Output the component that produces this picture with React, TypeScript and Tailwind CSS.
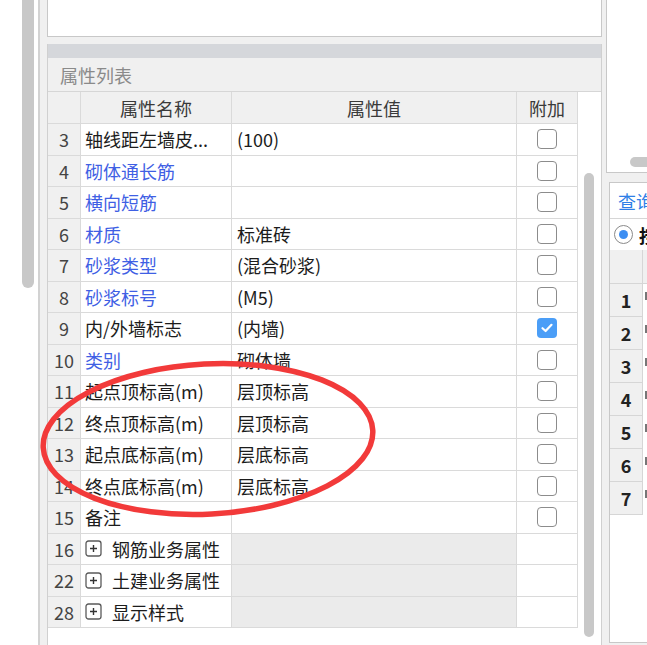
import React from "react";

type Row = {
  n: string;
  name: string;
  val: string;
  blue?: boolean;
  cb?: boolean;
  checked?: boolean;
  group?: boolean;
};

const rows: Row[] = [
  { n: "3", name: "轴线距左墙皮...", val: "(100)", cb: true },
  { n: "4", name: "砌体通长筋", val: "", blue: true, cb: true },
  { n: "5", name: "横向短筋", val: "", blue: true, cb: true },
  { n: "6", name: "材质", val: "标准砖", blue: true, cb: true },
  { n: "7", name: "砂浆类型", val: "(混合砂浆)", blue: true, cb: true },
  { n: "8", name: "砂浆标号", val: "(M5)", blue: true, cb: true },
  { n: "9", name: "内/外墙标志", val: "(内墙)", cb: true, checked: true },
  { n: "10", name: "类别", val: "砌体墙", blue: true, cb: true },
  { n: "11", name: "起点顶标高(m)", val: "层顶标高", cb: true },
  { n: "12", name: "终点顶标高(m)", val: "层顶标高", cb: true },
  { n: "13", name: "起点底标高(m)", val: "层底标高", cb: true },
  { n: "14", name: "终点底标高(m)", val: "层底标高", cb: true },
  { n: "15", name: "备注", val: "", cb: true },
  { n: "16", name: "钢筋业务属性", val: "", group: true },
  { n: "22", name: "土建业务属性", val: "", group: true },
  { n: "28", name: "显示样式", val: "", group: true },
];

function Checkbox({ checked }: { checked?: boolean }) {
  if (checked) {
    return (
      <div className="w-[20px] h-[20px] rounded-[4px] bg-[#4b9ef7] flex items-center justify-center">
        <svg width="14" height="14" viewBox="0 0 14 14">
          <path d="M2.5 7.2 L5.6 10 L11.5 3.8" fill="none" stroke="#fff" strokeWidth="2.2" strokeLinecap="round" strokeLinejoin="round" />
        </svg>
      </div>
    );
  }
  return <div className="w-[20px] h-[20px] rounded-[4px] border-[1.5px] border-[#8c8c8c] bg-white" />;
}

function PlusBox() {
  return (
    <svg width="17" height="17" viewBox="0 0 17 17" className="shrink-0">
      <rect x="1" y="1" width="15" height="15" rx="2.5" fill="#fff" stroke="#5a5a5a" strokeWidth="1.3" />
      <path d="M5 8.5 H12 M8.5 5 V12" stroke="#333" strokeWidth="1.4" />
    </svg>
  );
}

export default function App() {
  const cell = "border-r border-b border-[#dadada]";
  return (
    <div className="relative w-[647px] h-[645px] overflow-hidden bg-[#f0f0f0] font-['Noto_Sans_CJK_SC','Noto_Sans',sans-serif] text-[18px] leading-none flex">
      {/* left strip */}
      <div className="w-[38px] h-full bg-white shrink-0">
        <div className="ml-[22px] w-[12px] h-[288px] bg-[#c8c8c8] rounded-b-[6px]" />
      </div>
      <div className="w-[2px] h-full bg-[#d2d2d2] shrink-0" />
      <div className="w-[7px] h-full shrink-0" />

      {/* main column */}
      <div className="w-[555px] h-full shrink-0 flex flex-col">
        <div className="h-[37px] bg-white border-x border-b border-[#c8c8c8] shrink-0" />
        <div className="h-[7px] shrink-0" />
        <div className="flex-1 flex flex-col border-x border-[#d0d0d0] bg-white">
          <div className="h-[14px] bg-[#d5d7db] shrink-0" />
          <div className="h-[34px] bg-[#f0f0f0] border-b border-[#d6d6d6] flex items-center pl-[12px] text-[#8a8a8a] shrink-0">
            属性列表
          </div>
          <div className="flex flex-1">
            <div className="w-[530px] shrink-0 flex flex-col">
              {/* header */}
              <div className="flex h-[32px] text-[#3a3a3a]">
                <div className={`w-[33px] bg-[#f0f0f0] ${cell}`} />
                <div className={`w-[151px] bg-[#f0f0f0] flex items-center justify-center ${cell}`}>属性名称</div>
                <div className={`w-[285px] bg-[#f0f0f0] flex items-center justify-center ${cell}`}>属性值</div>
                <div className={`w-[61px] bg-[#f0f0f0] flex items-center justify-center ${cell}`}>附加</div>
              </div>
              {rows.map((r) => (
                <div key={r.n} className="flex h-[31.5px]">
                  <div className={`w-[33px] shrink-0 bg-[#f0f0f0] flex items-center justify-center text-[#444] ${cell}`}>{r.n}</div>
                  <div
                    className={`w-[151px] shrink-0 flex items-center pl-[4px] whitespace-nowrap overflow-hidden ${cell} ${
                      r.blue ? "text-[#3f5fe4]" : "text-[#1c1c1c]"
                    }`}
                  >
                    {r.group ? (
                      <div className="flex items-center gap-[10px]">
                        <PlusBox />
                        <span>{r.name}</span>
                      </div>
                    ) : (
                      r.name
                    )}
                  </div>
                  <div
                    className={`w-[285px] shrink-0 flex items-center pl-[5px] whitespace-nowrap text-[#1c1c1c] ${cell} ${
                      r.group ? "bg-[#ebebeb]" : "bg-white"
                    }`}
                  >
                    {r.val}
                  </div>
                  <div className={`w-[61px] shrink-0 flex items-center justify-center ${cell}`}>
                    {r.cb ? <Checkbox checked={r.checked} /> : null}
                  </div>
                </div>
              ))}
            </div>
            <div className="flex-1">
              <div className="ml-[6px] mt-[81px] w-[10px] h-[464px] rounded-full bg-[#c8c8c8]" />
            </div>
          </div>
        </div>
      </div>

      <div className="w-[4px] h-full shrink-0" />

      {/* right column */}
      <div className="w-[41px] h-full shrink-0 flex flex-col">
        <div className="h-[173px] bg-white border-l border-b border-[#c8c8c8] flex flex-col justify-end pb-[5px] shrink-0">
          <div className="ml-[23px] w-[30px] h-[10px] rounded-l-full bg-[#c8c8c8]" />
        </div>
        <div className="h-[9px] shrink-0" />
        <div className="ml-[3px] h-[461px] bg-white border-l border-t border-b border-[#c8c8c8] flex flex-col overflow-hidden shrink-0">
          <div className="h-[36px] border-b border-[#d6d6d6] flex items-center pl-[8px] text-[#2f7fe6] whitespace-nowrap shrink-0">
            查询
          </div>
          <div className="h-[31px] flex items-center pl-[4px] gap-[6px] whitespace-nowrap shrink-0">
            <div className="w-[19px] h-[19px] rounded-full border-[1.5px] border-[#8a8a8a] flex items-center justify-center shrink-0">
              <div className="w-[9px] h-[9px] rounded-full bg-[#3d8ef2]" />
            </div>
            <span className="text-[#111] font-bold">按</span>
          </div>
          <div className="flex flex-col">
            <div className="flex h-[34px]">
              <div className="w-[33px] shrink-0 bg-[#f0f0f0] border-r border-b border-[#d6d6d6]" />
              <div className="flex-1 bg-[#f0f0f0] border-b border-[#d6d6d6]" />
            </div>
            {["1", "2", "3", "4", "5", "6", "7"].map((n) => (
              <div key={n} className="flex h-[33px]">
                <div className="w-[33px] shrink-0 bg-[#f0f0f0] border-r border-b border-[#d6d6d6] flex items-center justify-center font-bold text-[#222]">
                  {n}
                </div>
                <div className="flex-1 pl-[2px] pt-[8px]">
                  <div className="w-[3px] h-[8px] bg-[#777]" />
                </div>
              </div>
            ))}
          </div>
        </div>
      </div>

      {/* red hand-drawn ellipse overlay */}
      <svg className="absolute inset-0 pointer-events-none" width="647" height="645" viewBox="0 0 647 645">
        <ellipse cx="208" cy="439" rx="165" ry="75" fill="none" stroke="#f23a3a" strokeWidth="5.5" transform="rotate(-3 208 439)" />
      </svg>
    </div>
  );
}
